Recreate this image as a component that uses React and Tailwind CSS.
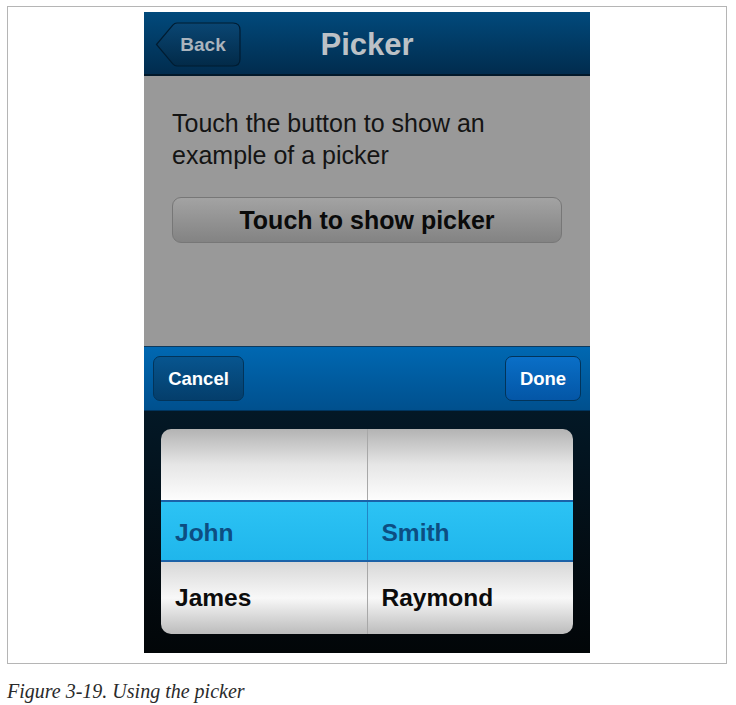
import React from "react";

const names = [
  { first: "John", last: "Smith" },
  { first: "James", last: "Raymond" },
];

const BackButton = () => (
  <button className="relative w-[86px] h-[45px] ml-[11px] mt-[3px] shrink-0">
    <svg className="absolute inset-0" width="86" height="45" viewBox="0 0 86 45">
      <defs>
        <linearGradient id="backg" x1="0" y1="0" x2="0" y2="1">
          <stop offset="0" stopColor="#0a4673" />
          <stop offset="1" stopColor="#022a48" />
        </linearGradient>
      </defs>
      <path
        d="M1.5 22.5 L18 3 Q19.5 1 22 1 L78 1 Q85 1 85 8 L85 37 Q85 44 78 44 L22 44 Q19.5 44 18 42 Z"
        fill="url(#backg)"
        stroke="#011c31"
        strokeWidth="1.2"
      />
    </svg>
    <span className="relative block pl-[10px] pt-[1px] text-[19px] font-bold text-[#aab4bd]">Back</span>
  </button>
);

const ToolButton = ({ label, primary }) => (
  <button
    className={
      "h-[45px] rounded-[7px] border border-[#02345a] text-[18.5px] font-bold text-white " +
      (primary
        ? "w-[76px] bg-gradient-to-b from-[#0a6fc7] to-[#0456a6]"
        : "w-[91px] bg-gradient-to-b from-[#07558f] to-[#043e6b]")
    }
  >
    {label}
  </button>
);

export default function App() {
  return (
    <div className="bg-white w-[736px] h-[705px] font-['Liberation_Sans',Arial,sans-serif]">
      <div className="pt-[6px] pl-[7px]">
        <div className="w-[720px] h-[658px] border border-[#b5b5b5] pt-[5px]">
          <div className="w-[446px] h-[641px] mx-auto flex flex-col">
            {/* nav bar */}
            <div className="relative h-[64px] flex items-center bg-gradient-to-b from-[#014a7c] to-[#012c4e] border-b-2 border-[#01182a]">
              <BackButton />
              <div className="absolute inset-0 pt-[4px] flex items-center justify-center pointer-events-none">
                <span className="text-[31px] font-bold text-[#bcc1c6]">Picker</span>
              </div>
            </div>

            {/* content */}
            <div className="h-[270px] bg-[#999999] px-[28px] pt-[31px]">
              <p className="text-[25px] leading-[32px] text-[#141414]">
                Touch the button to show an
                <br />
                example of a picker
              </p>
              <button className="mt-[26px] w-[390px] h-[46px] pt-[2px] rounded-[9px] border border-[#777777] bg-gradient-to-b from-[#a3a3a3] to-[#838383] text-[25px] font-bold text-[#0a0a0a]">
                Touch to show picker
              </button>
            </div>

            {/* toolbar */}
            <div className="h-[65px] flex items-center justify-between px-[9px] bg-gradient-to-b from-[#0068b2] to-[#00508e] border-t border-[#0f3a5c] border-b border-b-[#00355f]">
              <ToolButton label="Cancel" />
              <ToolButton label="Done" primary />
            </div>

            {/* picker area */}
            <div className="flex-1 bg-gradient-to-b from-[#031826] to-[#020608] px-[17px] pt-[18px]">
              <div className="h-[205px] rounded-[10px] overflow-hidden flex flex-col">
                <div className="h-[71px] flex bg-gradient-to-b from-[#b3b3b3] via-[#e6e6e6] to-[#fdfdfd]">
                  <div className="flex-1 border-r border-[#a8a8a8]" />
                  <div className="flex-1" />
                </div>
                <div className="h-[62px] flex bg-gradient-to-b from-[#2cc3f4] to-[#1fb6ec] border-y-2 border-[#1b62a8]">
                  <div className="flex-1 flex items-center pl-[14px] pt-[5px] border-r border-[#2286c6] text-[24.5px] font-bold text-[#0d4e82]">
                    {names[0].first}
                  </div>
                  <div className="flex-1 flex items-center pl-[14px] pt-[5px] text-[24.5px] font-bold text-[#0d4e82]">
                    {names[0].last}
                  </div>
                </div>
                <div className="flex-1 flex bg-gradient-to-b from-[#d8d8d8] via-[#f8f8f8] to-[#bcbcbc]">
                  <div className="flex-1 flex items-center pl-[14px] border-r border-[#a8a8a8] text-[24.5px] font-bold text-[#0c0c0c]">
                    {names[1].first}
                  </div>
                  <div className="flex-1 flex items-center pl-[14px] text-[24.5px] font-bold text-[#0c0c0c]">
                    {names[1].last}
                  </div>
                </div>
              </div>
            </div>
          </div>
        </div>
      </div>
      <p className="mt-[12px] pl-[7px] text-[20px] italic text-[#2a2a2a] font-['Liberation_Serif','Times_New_Roman',serif]">
        Figure 3-19. Using the picker
      </p>
    </div>
  );
}
